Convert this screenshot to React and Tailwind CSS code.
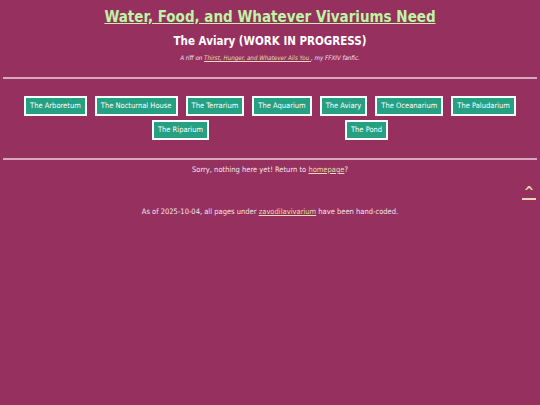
import React from "react";

const places = [
  "The Arboretum",
  "The Nocturnal House",
  "The Terrarium",
  "The Aquarium",
  "The Aviary",
  "The Oceanarium",
  "The Paludarium",
  "The Riparium",
  "The Pond",
];

export default function App() {
  return (
    <div className="relative min-h-[405px] bg-[#96305e] text-[#f6e4ee] text-center font-['DejaVu_Sans_Condensed','DejaVu_Sans',sans-serif]">
      {/* HEADER */}
      <header className="pt-[8px]">
        <h1 className="text-[15px] leading-[18px] font-bold">
          <a href="#" className="text-[#bff5a4] underline">
            Water, Food, and Whatever Vivariums Need
          </a>
        </h1>
        <h2 className="mt-[8px] text-[11.5px] leading-[14px] font-bold text-white">
          The Aviary (WORK IN PROGRESS)
        </h2>
        <p className="mt-[6px] text-[6.2px] leading-[8px] italic">
          A riff on{" "}
          <a href="#" className="text-[#e8dcb0] underline">
            Thirst, Hunger, and Whatever Ails You{" "}
          </a>
          , my FFXIV fanfic.
        </p>
      </header>

      <hr className="mx-auto mt-[15px] w-[99%] border-0 h-[2px] bg-[#d7a9c0]" />

      {/* NAV */}
      <nav className="mx-[20px] mt-[17px] flex flex-wrap justify-evenly gap-x-[4px] gap-y-[4px]">
        {places.map((p) => (
          <a
            key={p}
            href="#"
            className="border-2 border-white bg-[#25a083] px-[4px] h-[20px] flex items-center text-[7.5px] text-white"
          >
            {p}
          </a>
        ))}
      </nav>

      <hr className="mx-auto mt-[18px] w-[99%] border-0 h-[2px] bg-[#d7a9c0]" />

      <p className="mt-[5px] text-[7.5px] leading-[10px]">
        Sorry, nothing here yet! Return to{" "}
        <a href="#" className="text-[#e8dcb0] underline">
          homepage
        </a>
        ?
      </p>

      <p className="mt-[32px] text-[7.5px] leading-[10px]">
        As of 2025-10-04, all pages under{" "}
        <a href="#" className="text-[#e8dcb0] underline">
          zavodilavivarium
        </a>{" "}
        have been hand-coded.
      </p>

      {/* BACK TO TOP */}
      <a
        href="#"
        className="absolute right-[4px] top-[186px] w-[14px] flex flex-col items-center text-[#e3dab2]"
      >
        <span className="block h-[12px] text-[14px] leading-[12px] font-bold">^</span>
        <span className="block w-[14px] h-[2px] bg-[#e3dab2]" />
      </a>
    </div>
  );
}
